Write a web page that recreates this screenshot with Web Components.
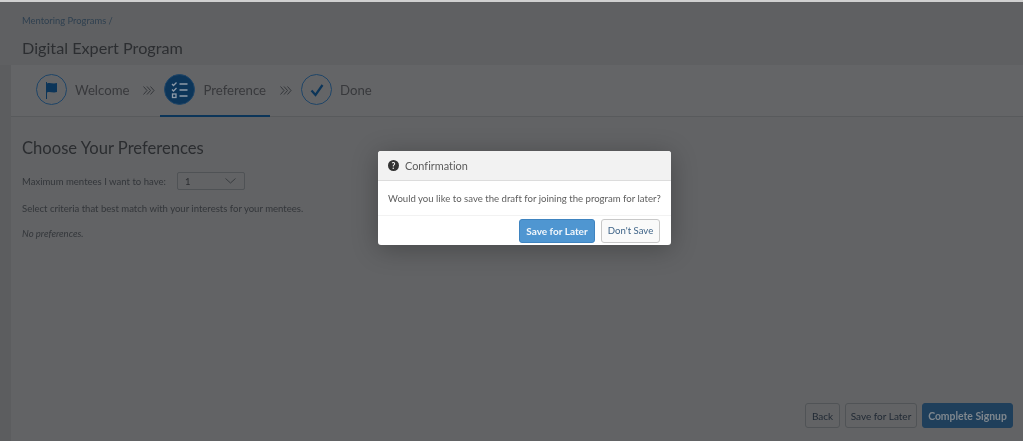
<!DOCTYPE html>
<html><head><meta charset="utf-8"><style>
html,body{margin:0;padding:0;height:100%;overflow:hidden;background:#5c5d5f;font-family:Lato,"Liberation Sans",sans-serif;font-variant-ligatures:none}
</style></head><body>
<app-page></app-page>
<template id="step-t"><style>
:host{display:flex;align-items:center;gap:8px;height:52px;padding:0 4px;box-sizing:border-box;border-bottom:2px solid transparent;font-size:13.2px;color:#38393c;flex:none}
:host([active]){border-bottom-color:#0c3559}
.c{width:31px;height:31px;border-radius:50%;border:1px solid #1f4568;box-sizing:border-box;display:flex;align-items:center;justify-content:center;color:#0c3559}
:host([active]) .c{background:#0c3559;color:#8d9aa8}
svg{display:block}
</style><span class="c"><slot name="icon"></slot></span><span><slot></slot></span></template>
<template id="btn-t"><style>
:host{display:inline-flex;align-items:center;justify-content:center;box-sizing:border-box;height:25px;border-radius:3px;border:1px solid #505356;font-size:10px;color:#1f2833;white-space:nowrap}
:host([kind=primary]){background:#1f3f5b;border-color:#1f3f5b;color:#7f878e;font-weight:700;font-size:10.4px}
:host([kind=modal]){background:#4f96d1;border-color:#3f84c0;color:#f3f7fb;font-weight:700;height:24px}
:host([kind=plain]){background:#fafafa;border-color:#c8c8c8;color:#3f6488;height:24px;font-size:9.6px}
</style><slot></slot></template>
<template id="modal-t"><style>
:host{position:absolute;left:378px;top:149px;width:293px;height:94px;background:#fff;border-radius:3px;box-shadow:0 4px 26px rgba(0,0,0,.28);display:flex;flex-direction:column;overflow:hidden;color:#5e5e5e;font-size:9.6px}
header{height:30px;box-sizing:border-box;background:#f2f2f2;border-bottom:1px solid #dcdcdc;display:flex;align-items:center;gap:6px;padding:0 10px;font-size:10.9px;color:#5b5b5b}
.b{height:35px;box-sizing:border-box;border-bottom:1px solid #f2f2f2;display:flex;align-items:center;padding:0 10px;white-space:nowrap}
footer{flex:1;display:flex;justify-content:flex-end;align-items:center;gap:6px;padding:0 11px 0 0}
</style><header><slot name="icon"></slot><slot name="title"></slot></header><div class="b"><slot></slot></div><footer><slot name="actions"></slot></footer></template>
<template id="page-t"><style>
:host{display:block;position:relative;width:1023px;height:441px;overflow:hidden;box-sizing:border-box;border-top:2px solid #d0d0d0;background:#5c5d5f}
.wrap{position:relative;height:439px;filter:blur(.5px);display:flex;flex-direction:column}
.top{height:63px;box-sizing:border-box;padding:13px 0 0 22px;color:#35373a;flex:none;background:#5f6062}
.crumb{font-size:9.4px;color:#2f4050;line-height:12px}
h1{margin:10px 0 0;font-weight:400;font-size:16.2px;line-height:21px;color:#2c2e31}
.main{flex:1;margin-left:11px;background:#626365;display:flex;flex-direction:column}
.steps{height:52px;background:#646567;border-bottom:1px solid #585a5c;display:flex;align-items:center;padding-left:21px;box-sizing:border-box;flex:none}
.sep{width:27px;display:flex;flex:none;padding-left:10px;box-sizing:border-box}
.content{padding:20px 0 0 11px;font-size:9.55px;color:#33363a;flex:1;position:relative;display:flex;flex-direction:column}
h2{margin:0;font-weight:400;font-size:16.6px;line-height:22px;color:#2b2d30}
.row{display:flex;align-items:center;gap:11px;margin-top:13px;height:18px}
.sel{width:68px;height:18px;box-sizing:border-box;border:1px solid #4f5255;border-radius:2px;display:flex;align-items:center;justify-content:space-between;padding:0 8px 0 7px;color:#2b2d30;font-size:9.5px}
p{margin:0}
.foot{margin-top:auto;display:flex;justify-content:flex-end;gap:5px;padding:0 10px 13px 0}
</style>
<div class="wrap">
<div class="top"><div class="crumb">Mentoring Programs /</div><h1>Digital Expert Program</h1></div>
<div class="main">
<div class="steps">
<wizard-step><svg slot="icon" width="18" height="20" viewBox="0 0 18 20" fill="none"><path d="M3.500 2v17" stroke="currentColor" stroke-width="1"/><path d="M4 3.500c3-1.200 6 .8 10-.5v9c-4 1.200-7-.8-10 .5z" fill="currentColor"/></svg>Welcome</wizard-step>
<span class="sep"><svg width="12" height="9" viewBox="0 0 12 9" fill="none" stroke="#303235" stroke-width=".9"><path d="M.5.5l3.500 4-3.500 4M4 .5l3.500 4-3.500 4M7.500.5l3.500 4-3.500 4"/></svg></span>
<wizard-step active><svg slot="icon" width="20" height="20" viewBox="0 0 20 20" fill="none" stroke="currentColor" stroke-width="1.300"><path d="M2 4l1.500 1.500L6.500 2.500M2 9.500L3.500 11l3-3"/><path d="M9.500 4h8M9.500 10h8M9.500 16h8"/><rect x="2.500" y="14" width="3.500" height="3.500"/></svg>Preference</wizard-step>
<span class="sep"><svg width="12" height="9" viewBox="0 0 12 9" fill="none" stroke="#303235" stroke-width=".9"><path d="M.5.5l3.500 4-3.500 4M4 .5l3.500 4-3.500 4M7.500.5l3.500 4-3.500 4"/></svg></span>
<wizard-step><svg slot="icon" width="18" height="18" viewBox="0 0 18 18" fill="none"><path d="M3.500 9.500l4 4.500 7-10" stroke="currentColor" stroke-width="2.200"/></svg>Done</wizard-step>
</div>
<div class="content">
<h2>Choose Your Preferences</h2>
<div class="row"><span>Maximum mentees I want to have:</span><span class="sel"><span>1</span><svg width="11" height="6" viewBox="0 0 11 6" fill="none"><path d="M.5.5l5 4.500 5-4.500" stroke="#3a3d40"/></svg></span></div>
<p style="margin-top:13px;line-height:12px">Select criteria that best match with your interests for your mentees.</p>
<p style="margin-top:13px;line-height:12px;font-style:italic">No preferences.</p>
<div class="foot"><ui-btn style="width:35px">Back</ui-btn><ui-btn style="width:72px">Save for Later</ui-btn><ui-btn kind="primary" style="width:91px">Complete Signup</ui-btn></div>
</div>
</div>
<confirm-modal>
<svg slot="icon" width="11" height="11" viewBox="0 0 11 11"><circle cx="5.500" cy="5.500" r="5.500" fill="#333"/><text x="5.500" y="8.600" text-anchor="middle" font-size="8.500" font-weight="700" font-family="Lato" fill="#f2f2f2">?</text></svg>
<span slot="title">Confirmation</span>
Would you like to save the draft for joining the program for later?
<ui-btn slot="actions" kind="modal" style="width:76px">Save for Later</ui-btn>
<ui-btn slot="actions" kind="plain" style="width:59px">Don't Save</ui-btn>
</confirm-modal>
</div>
</template>
<script>
function def(name,tid){customElements.define(name,class extends HTMLElement{constructor(){super();this.attachShadow({mode:'open'}).appendChild(document.getElementById(tid).content.cloneNode(true));}});}
def('wizard-step','step-t');def('ui-btn','btn-t');def('confirm-modal','modal-t');def('app-page','page-t');
</script>
</body></html>
